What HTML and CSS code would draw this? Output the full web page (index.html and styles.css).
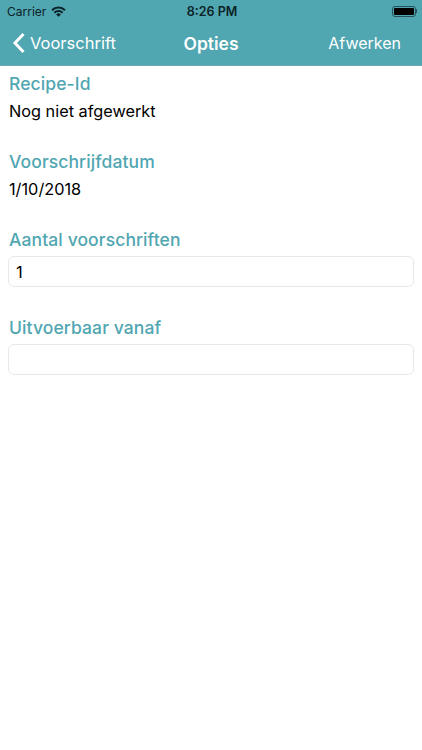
FILE: index.html
```html
<!DOCTYPE html>
<html lang="nl">
<head>
    <meta charset="UTF-8">
    <meta name="viewport" content="width=device-width, initial-scale=1.0">
    <title>Opties</title>
    <link rel="stylesheet" href="styles.css">
</head>
<body>
    <header class="top-bar">
        <div class="status-bar">
            <div class="status-left">
                <span>Carrier</span>
                <svg class="wifi" width="15" height="11" viewBox="0 0 15 11">
                    <path d="M0.3 3.6A10.2 10.2 0 0 1 14.7 3.6L13.3 5A8.2 8.2 0 0 0 1.7 5Z"/>
                    <path d="M2.7 6A6.8 6.8 0 0 1 12.3 6L10.9 7.4A4.8 4.8 0 0 0 4.1 7.4Z"/>
                    <path d="M5.1 8.4A3.4 3.4 0 0 1 9.9 8.4L7.5 10.8Z"/>
                </svg>
            </div>
            <div class="status-time">8:26 PM</div>
            <div class="status-right">
                <div class="battery"><div class="battery-fill"></div></div>
                <div class="battery-tip"></div>
            </div>
        </div>
        <nav class="nav-bar">
            <div class="nav-back">
                <svg class="chevron" width="14" height="22" viewBox="0 0 14 22">
                    <path d="M11.5 2L3 11L11.5 20"/>
                </svg>
                <span>Voorschrift</span>
            </div>
            <div class="nav-title">Opties</div>
            <div class="nav-action">Afwerken</div>
        </nav>
    </header>

    <main class="content">
        <section class="field">
            <div class="field-label">Recipe-Id</div>
            <div class="field-value">Nog niet afgewerkt</div>
        </section>
        <section class="field">
            <div class="field-label">Voorschrijfdatum</div>
            <div class="field-value">1/10/2018</div>
        </section>
        <section class="field">
            <label class="field-label" for="aantal">Aantal voorschriften</label>
            <input class="field-input" type="text" id="aantal" value="1">
        </section>
        <section class="field">
            <label class="field-label" for="vanaf">Uitvoerbaar vanaf</label>
            <input class="field-input" type="text" id="vanaf">
        </section>
    </main>
</body>
</html>
```

FILE: styles.css
```css
* {
    box-sizing: border-box;
}

body {
    margin: 0;
    background: white;
    font-family: "Inter", "Liberation Sans", sans-serif;
    color: black;
}

.top-bar {
    height: 66px;
    background: #50a6b1;
    border-bottom: 1px solid #6aa8b0;
}

.status-bar {
    height: 22px;
    padding: 0 7px;
    display: flex;
    align-items: center;
    justify-content: space-between;
    position: relative;
    font-size: 12px;
    color: #0b2226;
}

.status-left {
    display: flex;
    align-items: center;
    gap: 5px;
}

.wifi path {
    fill: #0b2226;
}

.status-time {
    position: absolute;
    left: 2px;
    right: 0;
    text-align: center;
    font-size: 12.5px;
    font-weight: 600;
}

.status-right {
    display: flex;
    align-items: center;
    margin-right: -2px;
}

.battery {
    width: 24px;
    height: 11px;
    padding: 1px;
    border: 1px solid #26525a;
    border-radius: 3px;
}

.battery-fill {
    height: 100%;
    background: black;
    border-radius: 1px;
}

.battery-tip {
    width: 1px;
    height: 4px;
    background: #26525a;
}

.nav-bar {
    height: 42px;
    padding: 0 21px 0 12px;
    display: flex;
    align-items: center;
    justify-content: space-between;
    position: relative;
    font-size: 16.5px;
    color: white;
}

.nav-back {
    display: flex;
    align-items: center;
    gap: 4px;
}

.chevron path {
    fill: none;
    stroke: white;
    stroke-width: 3;
}

.nav-title {
    position: absolute;
    left: 0;
    right: 0;
    text-align: center;
    font-size: 17.5px;
    font-weight: 600;
}

.nav-action {
    position: relative;
    font-size: 16px;
}

.content {
    padding: 8px 8px 0;
}

.field {
    display: flow-root;
    margin-bottom: 30px;
}

.field-label {
    display: block;
    height: 20px;
    padding-left: 1px;
    line-height: 20px;
    font-size: 17.5px;
    font-weight: 500;
    letter-spacing: 0.1px;
    color: #50a6b1;
}

.field-value {
    height: 22px;
    margin-top: 6px;
    padding-left: 1px;
    line-height: 22px;
    font-size: 16.3px;
}

.field-input {
    display: block;
    width: 100%;
    height: 31px;
    margin: 6px 0 1px;
    padding: 0 7px;
    border: 1px solid #e8e8e8;
    border-radius: 6px;
    outline: none;
    background: white;
    font-family: inherit;
    font-size: 16.5px;
    color: black;
}
```
